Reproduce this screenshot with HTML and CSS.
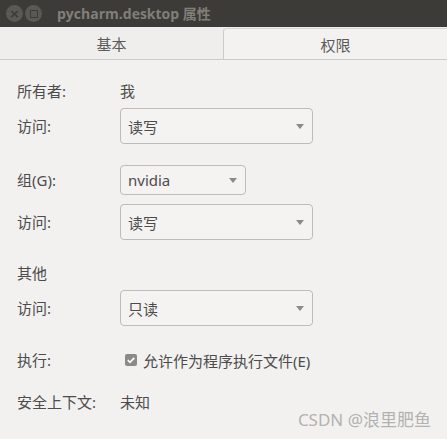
FILE: index.html
```html
<!DOCTYPE html>
<html lang="zh-CN">
<head>
    <meta charset="UTF-8">
    <title>pycharm.desktop 属性</title>
    <link rel="stylesheet" href="styles.css">
</head>
<body>
    <div class="window">
        <div class="titlebar">
            <span class="wbtn">&#215;</span>
            <span class="wbtn"><i class="max"></i></span>
            <span class="title">pycharm.desktop 属性</span>
        </div>
        <div class="tabs">
            <div class="tab">基本</div>
            <div class="tab active">权限</div>
        </div>
        <div class="content">
            <div class="row r-owner">
                <span class="label">所有者:</span>
                <span class="value">我</span>
            </div>
            <div class="row r-access1">
                <span class="label">访问:</span>
                <div class="combo wide tall"><span>读写</span><i class="arrow"></i></div>
            </div>
            <div class="row r-group">
                <span class="label">组(G):</span>
                <div class="combo narrow"><span class="latin">nvidia</span><i class="arrow"></i></div>
            </div>
            <div class="row r-access2">
                <span class="label">访问:</span>
                <div class="combo wide tall"><span>读写</span><i class="arrow"></i></div>
            </div>
            <div class="row r-other">
                <span class="label">其他</span>
            </div>
            <div class="row r-access3">
                <span class="label">访问:</span>
                <div class="combo wide tall"><span>只读</span><i class="arrow"></i></div>
            </div>
            <div class="row r-exec">
                <span class="label">执行:</span>
                <label class="check">
                    <span class="box">
                        <svg width="12" height="12" viewBox="0 0 12 12"><path d="M2.8 6.2 L5 8.3 L9.3 3.8" fill="none" stroke="#fff" stroke-width="1.7"/></svg>
                    </span>
                    允许作为程序执行文件(E)
                </label>
            </div>
            <div class="row r-sec">
                <span class="label">安全上下文:</span>
                <span class="value">未知</span>
            </div>
        </div>
        <div class="watermark">CSDN @浪里肥鱼</div>
    </div>
</body>
</html>
```

FILE: styles.css
```css
body {
    margin: 0;
    font-family: "Noto Sans", "Noto Sans CJK SC", sans-serif;
    background: #f2f1f0;
}
.window {
    width: 447px;
    height: 439px;
    position: relative;
    overflow: hidden;
    background: #f2f1f0;
    color: #4c4c4c;
}
.titlebar {
    height: 27px;
    background: #3c3b37;
    display: flex;
    align-items: center;
    padding-left: 6px;
}
.wbtn {
    width: 17px;
    height: 17px;
    border-radius: 50%;
    background: #5a5954;
    color: #3c3b37;
    font-size: 13px;
    line-height: 17px;
    text-align: center;
    margin-right: 2px;
    display: flex;
    align-items: center;
    justify-content: center;
    font-family: "DejaVu Sans", sans-serif;
    font-weight: bold;
}
.max {
    width: 6px;
    height: 6px;
    border: 1.5px solid #3c3b37;
    display: block;
}
.title {
    margin-left: 13px;
    color: #807f7a;
    font-family: "Open Sans", "Noto Sans CJK SC", sans-serif;
    font-weight: bold;
    font-size: 14px;
    margin-top: -1px;
}
.tabs {
    display: flex;
    height: 32px;
    border-bottom: 1px solid #cdcbc8;
    background: #efeeec;
}
.tab {
    flex: 1;
    display: flex;
    align-items: center;
    justify-content: center;
    font-size: 15px;
    color: #5a5a5a;
}
.tab.active {
    margin-top: 1px;
    border-left: 1px solid #cdcbc8;
    border-top: 1px solid #d8d6d3;
    border-top-left-radius: 4px;
    background: #f3f2f1;
}
.content {
    padding-left: 17px;
    font-size: 15px;
}
.row {
    display: grid;
    grid-template-columns: 103px auto;
    align-items: center;
}
.row > .label, .row > .value {
    height: 20px;
    line-height: 20px;
}
.r-owner { margin-top: 21px; }
.r-access1 { margin-top: 7px; }
.r-group { margin-top: 21px; }
.r-access2 { margin-top: 9px; }
.r-other { margin-top: 23px; }
.r-access3 { margin-top: 7px; }
.r-exec { margin-top: 24px; }
.r-sec { margin-top: 22px; }
.combo {
    box-sizing: border-box;
    height: 30px;
    border: 1px solid #bebcb8;
    border-radius: 4px;
    background: #f4f3f2;
    display: flex;
    align-items: center;
    justify-content: space-between;
    padding: 0 8px 0 7px;
}
.combo.tall { height: 36px; }
.combo.wide { width: 193px; }
.combo.narrow { width: 126px; }
.latin {
    font-family: "Noto Sans", sans-serif;
    font-size: 15px;
}
.arrow {
    width: 0;
    height: 0;
    border-left: 4.5px solid transparent;
    border-right: 4.5px solid transparent;
    border-top: 5px solid #8a8a88;
    margin-top: 1px;
}
.check {
    display: flex;
    align-items: center;
    gap: 6px;
    padding-left: 5px;
    height: 20px;
}
.box {
    width: 12px;
    height: 12px;
    border-radius: 2px;
    background: #8b8a86;
    display: flex;
}
.watermark {
    position: absolute;
    right: 16px;
    bottom: 8px;
    font-size: 17px;
    color: #b3b2b0;
    font-family: "Noto Sans", "Noto Sans CJK SC", sans-serif;
}
```
